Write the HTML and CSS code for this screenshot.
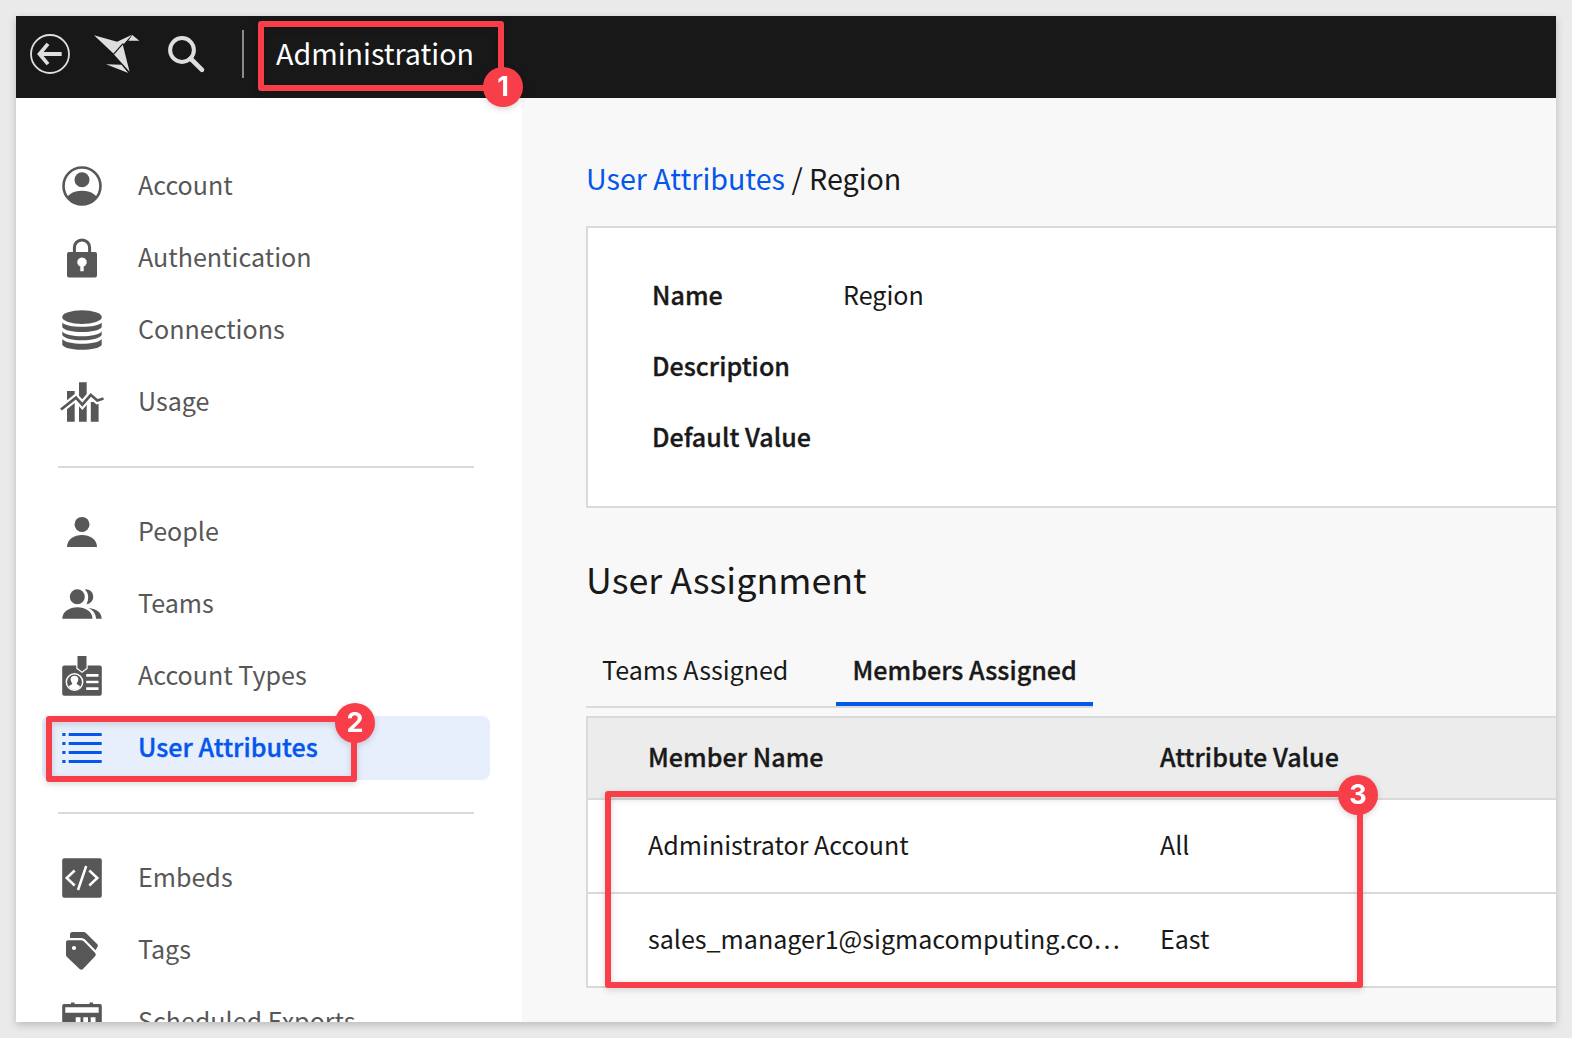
FILE: index.html
```
<!DOCTYPE html>
<html lang="en">
<head>
<meta charset="utf-8">
<title>Administration</title>
<link rel="stylesheet" href="styles.css">
</head>
<body>
<div class="app">
  <header class="topbar">
    <svg class="back" viewBox="0 0 40 40" fill="none" stroke="#dedede"><circle cx="20" cy="20" r="19" stroke-width="1.8"/><path d="M10 20H31.700" stroke-width="4"/><path d="M18 9.900L9.500 20L18 30.100" stroke-width="3.700"/></svg>
    <svg class="bird" viewBox="94 34 46 40" fill="#dedede"><path d="M94 35.300L122.500 43.200L113.400 53.500ZM116.500 42L132 34.800L124 43.800ZM132.300 35L139.300 40.800H128.300ZM122.800 44.800L129.600 71.800L114 54.600ZM106 64.200L121.400 64.800L128.300 73Z"/></svg>
    <svg class="search" viewBox="166 34 40 40" fill="none" stroke="#dedede"><circle cx="182" cy="50" r="11.900" stroke-width="4"/><path d="M190.500 58.500L202 69.800" stroke-width="4.600" stroke-linecap="round"/></svg>
    <span class="separator"></span>
    <h1 class="title">Administration</h1>
  </header>
  <div class="body">
    <nav class="sidebar">
      <ul class="group">
        <li class="item"><svg class="icon" viewBox="0 0 40 40"><defs><clipPath id="disc"><circle cx="20" cy="20" r="19"/></clipPath></defs><circle cx="20" cy="20" r="18.500" fill="none" stroke="currentColor" stroke-width="2.600"/><circle cx="20" cy="13.700" r="7.500"/><ellipse cx="20" cy="36" rx="16.500" ry="11.200" clip-path="url(#disc)"/></svg><span>Account</span></li>
        <li class="item"><svg class="icon" viewBox="0 0 40 40"><path d="M12.400 15V9.500a7.600 7.600 0 0 1 15.200 0V15" fill="none" stroke="currentColor" stroke-width="3"/><path fill-rule="evenodd" d="M7 14H33a2 2 0 0 1 2 2V37.500a2 2 0 0 1-2 2H7a2 2 0 0 1-2-2V16a2 2 0 0 1 2-2ZM18.300 28.500V33.300H21.700V28.500a4.700 4.700 0 1 0-3.400 0Z"/></svg><span>Authentication</span></li>
        <li class="item"><svg class="icon" viewBox="0 0 40 40"><ellipse cx="20" cy="7.100" rx="19.800" ry="6.900"/><path d="M.300 12.500C4 18.200 36 18.200 39.700 12.500V17.300C36 23.600 4 23.600.300 17.300ZM.300 21.300C4 28 36 28 39.700 21.300V25C36 32 4 32 .300 25ZM.300 29C4 35.300 36 35.300 39.700 29V35C36 41.300 4 41.300.300 35Z"/></svg><span>Connections</span></li>
        <li class="item"><svg class="icon" viewBox="0 0 40 40"><path d="M5 9H12.700V39.700H5ZM17 .300H24.700V39.700H17ZM28.800 20H36.600V39.700H28.800Z"/><path d="M-1 27.500L14 15.600L20.300 22.600L28.800 12.800L35.300 18.500L41.500 16.500" fill="none" stroke="#fff" stroke-width="7"/><path d="M-1 27.500L14 15.600L20.300 22.600L28.800 12.800L35.300 18.500L41.500 16.500" fill="none" stroke="currentColor" stroke-width="2.700"/></svg><span>Usage</span></li>
      </ul>
      <hr class="divider">
      <ul class="group">
        <li class="item"><svg class="icon" viewBox="0 0 40 40"><circle cx="20" cy="12.400" r="7.500"/><path d="M5 35C5 19 35 19 35 35Z"/></svg><span>People</span></li>
        <li class="item"><svg class="icon" viewBox="0 0 40 40"><circle cx="15.300" cy="12.700" r="7.500"/><path d="M.300 34.800C.300 19.300 30.500 19.300 30.500 34.800ZM23 5.200a7.500 7.500 0 0 1 1.500 15a13.500 13.500 0 0 0-1.500-15ZM26.500 24C35 25 39.700 29 39.700 34.800H34C34 30 31.500 26.500 26.500 24Z"/></svg><span>Teams</span></li>
        <li class="item"><svg class="icon" viewBox="0 0 40 40"><rect x=".200" y="9.500" width="39.600" height="30.300" rx="2"/><path d="M14.300 0H25.700V12.800L20 17L14.300 12.800Z" fill="#fff"/><path d="M15.500 0H24.500V12L20 15.400L15.500 12Z"/><circle cx="12.500" cy="26" r="8.200" fill="none" stroke="#fff" stroke-width="1.500"/><path d="M7 31C7 29 10 29 10.300 27.500C7 23 9 19.800 12.500 19.800S18 23 14.700 27.500C15 29 18 29 18 31C15 34.500 10 34.500 7 31Z" fill="#fff"/><path d="M24.200 19.300H36.500M24.200 26H36.500M24.200 32.700H36.500" stroke="#fff" stroke-width="2.700"/></svg><span>Account Types</span></li>
        <li class="item active"><svg class="icon" viewBox="0 0 40 40"><path d="M.300 5H3.500V8H.300ZM6.700 5H39.700V8H6.700ZM.300 14H3.500V17H.300ZM6.700 14H39.700V17H6.700ZM.300 23H3.500V26H.300ZM6.700 23H39.700V26H6.700ZM.300 32H3.500V35H.300ZM6.700 32H39.700V35H6.700Z"/></svg><span>User Attributes</span></li>
      </ul>
      <hr class="divider">
      <ul class="group">
        <li class="item"><svg class="icon" viewBox="0 0 40 40"><rect x=".200" y=".200" width="39.600" height="39.600" rx="2"/><path d="M12.700 12.500L4.700 20L12.700 27.500M27.300 12.500L35.300 20L27.300 27.500M24.200 8L16 32" fill="none" stroke="#fff" stroke-width="2.500"/></svg><span>Embeds</span></li>
        <li class="item"><svg class="icon" viewBox="0 0 40 40"><path fill-rule="evenodd" d="M6 10.200H18.500Q20.500 10.200 22 11.600L33 22.700Q34.500 24.300 33.300 26L21 38.900Q19.300 40.500 17.600 38.900L5 27Q4 26 4 24.500V12.200Q4 10.200 6 10.200ZM12 15.900a2.100 2.100 0 1 0 0 4.200a2.100 2.100 0 1 0 0-4.200Z"/><path d="M8 8V4.500Q8 2 10.500 2H21.500Q23 2 24.200 3.200L35.300 14.200Q36.300 15.300 35.700 16.500L33.500 20.200L23 9.600Q21.500 8 19.500 8Z"/></svg><span>Tags</span></li>
        <li class="item"><svg class="icon" viewBox="0 0 40 40"><path fill-rule="evenodd" d="M9 .500H12.500V2H27.500V.500H31V2H38Q39.800 2 39.800 4V40H.200V4Q.200 2 2 2H9ZM3.300 5.300V10.700H36.700V5.300ZM13.700 15.300V20H18.500V15.300ZM21.300 15.300V20H26V15.300ZM28.700 15.300V20H33.500V15.300Z"/></svg><span>Scheduled Exports</span></li>
      </ul>
    </nav>
    <main class="content">
      <div class="crumbs"><a class="link">User Attributes</a> / Region</div>
      <dl class="card">
        <div class="field"><dt>Name</dt><dd>Region</dd></div>
        <div class="field"><dt>Description</dt><dd></dd></div>
        <div class="field"><dt>Default Value</dt><dd></dd></div>
      </dl>
      <h2 class="heading">User Assignment</h2>
      <div class="tabs"><div class="tab">Teams Assigned</div><div class="tab selected">Members Assigned</div></div>
      <div class="table">
        <div class="row head"><span>Member Name</span><span>Attribute Value</span></div>
        <div class="row"><span>Administrator Account</span><span>All</span></div>
        <div class="row"><span>sales_manager1@sigmacomputing.co…</span><span>East</span></div>
      </div>
    </main>
  </div>
</div>
<div class="mark mark-1"><b class="badge">1</b></div>
<div class="mark mark-2"><b class="badge">2</b></div>
<div class="mark mark-3"><b class="badge">3</b></div>
</body>
</html>
```
FILE: styles.css
```
* { box-sizing: border-box; }

body {
  margin: 0;
  height: 1038px;
  padding: 16px;
  overflow: hidden;
  background: #eaeaea;
  color: #191919;
  font: 400 25.070px "Noto Sans CJK SC", "Noto Sans", sans-serif;
}

h1, h2, ul, dl, dd { margin: 0; padding: 0; font-weight: 400; }

.app {
  display: flex;
  flex-direction: column;
  height: 1006px;
  background: #f8f8f8;
  box-shadow: 0 3px 8px rgba(0, 0, 0, .2);
}

/* Top bar */
.topbar {
  flex: none;
  display: flex;
  align-items: center;
  height: 82px;
  padding: 0 14px 6px;
  background: #181818;
}
.back { width: 40px; height: 40px; }
.bird { width: 46px; height: 40px; margin-left: 24px; }
.search { width: 40px; height: 40px; margin-left: 26px; }
.separator { width: 2px; height: 48px; margin-left: 36px; background: #8b8b8b; }
.title { margin-left: 32px; padding-bottom: 2px; color: #fff; font-size: 28.650px; line-height: 40px; }

.body { flex: 1; display: flex; min-height: 0; }

/* Sidebar */
.sidebar {
  flex: none;
  width: 506px;
  padding: 56px 32px 0 26px;
  overflow: hidden;
  background: #fff;
  color: #575757;
}
.group { display: flex; flex-direction: column; gap: 8px; list-style: none; }
.item {
  flex: none;
  display: flex;
  align-items: center;
  gap: 36px;
  height: 64px;
  padding-left: 20px;
  border-radius: 8px;
}
.item span { padding-bottom: 4px; line-height: 36px; }
.icon { flex: none; width: 40px; height: 40px; overflow: visible; fill: currentColor; }
.active { background: #e7eefc; color: #0457ea; font-weight: 500; }
.divider { height: 2px; margin: 32px 16px; border: 0; background: #dadada; }

.active span, .field dt, .selected, .head {
  font-weight: 500;
  letter-spacing: .04px;
  -webkit-text-stroke: .35px currentColor;
}

/* Content */
.content { flex: 1; min-width: 0; padding: 60px 0 0 64px; }
.crumbs { height: 39px; margin-bottom: 29px; font-size: 28.650px; line-height: 39px; }
.link { color: #0457ea; }

.card {
  height: 282px;
  padding: 31px 0 0 64px;
  border: solid #dadada;
  border-width: 2px 0 2px 2px;
  background: #fff;
}
.field { display: flex; line-height: 71px; height: 71px; }
.field dt { width: 191px; }

.heading { margin-top: 50px; font-size: 35.800px; line-height: 41px; }

.tabs {
  display: flex;
  gap: 32px;
  width: 507px;
  margin-top: 37px;
  border-bottom: 2px solid #dadada;
}
.tab { height: 70px; padding: 0 16px; border-bottom: 4px solid transparent; line-height: 66px; white-space: nowrap; }
.selected { flex: 1; min-width: 0; border-color: #0457ea; }

.table { margin-top: 8px; border: solid #dadada; border-width: 2px 0 0 2px; background: #fff; }
.row {
  display: grid;
  grid-template-columns: 512px 1fr;
  height: 94px;
  padding-left: 60px;
  border-bottom: 2px solid #dadada;
  line-height: 88px;
}
.head { height: 82px; background: #ececec; line-height: 76px; }

/* Callouts drawn over the page */
.mark {
  position: absolute;
  border: 6px solid #f83e49;
  border-radius: 3px;
  filter: drop-shadow(0 2px 3px rgba(0, 0, 0, .16));
}
.mark-1 { left: 258px; top: 20.500px; width: 246px; height: 70.500px; }
.mark-2 { left: 46px; top: 716px; width: 311px; height: 66.300px; }
.mark-3 { left: 604.600px; top: 791px; width: 758.700px; height: 196.700px; }
.badge {
  position: absolute;
  width: 40px;
  height: 40px;
  border-radius: 50%;
  background: #f83e49;
  color: #fff;
  font: 700 27px/39px Inter, sans-serif;
  text-align: center;
}
.mark-1 .badge { left: 219px; top: 40.500px; }
.mark-2 .badge { left: 283px; top: -19px; }
.mark-3 .badge { left: 727.400px; top: -22.500px; }
```
